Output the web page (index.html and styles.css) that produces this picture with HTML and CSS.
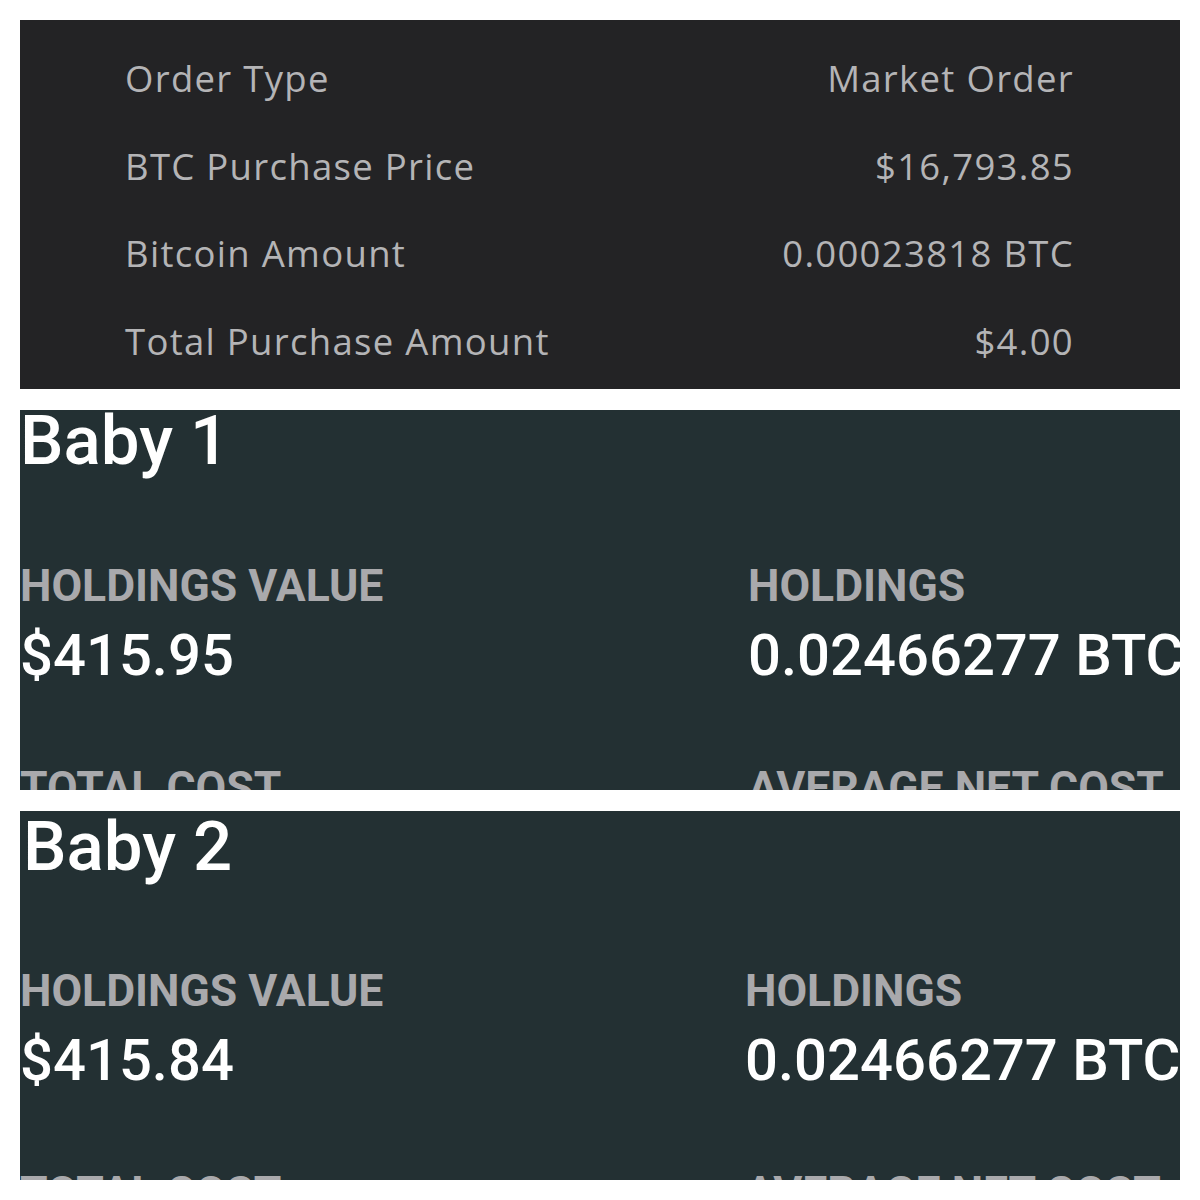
FILE: index.html
```html
<html>
<head>
<title>BTC Purchase</title>
<link rel="stylesheet" href="styles.css">
</head>

<body>
<div class="collage">

<div class="receipt">
	<div class="receipt-row"><span>Order Type</span><span>Market Order</span></div>
	<div class="receipt-row"><span>BTC Purchase Price</span><span>$16,793.85</span></div>
	<div class="receipt-row"><span>Bitcoin Amount</span><span>0.00023818 BTC</span></div>
	<div class="receipt-row"><span>Total Purchase Amount</span><span>$4.00</span></div>
</div>

<div class="wallet">
	<h1 class="wallet-name">Baby 1</h1>
	<div class="stats">
		<div class="stat">
			<div class="stat-label">HOLDINGS VALUE</div>
			<div class="stat-value">$415.95</div>
		</div>
		<div class="stat">
			<div class="stat-label">HOLDINGS</div>
			<div class="stat-value">0.02466277 BTC</div>
		</div>
		<div class="stat">
			<div class="stat-label">TOTAL COST</div>
			<div class="stat-value">$400.00</div>
		</div>
		<div class="stat">
			<div class="stat-label">AVERAGE NET COST</div>
			<div class="stat-value">$16,219.08</div>
		</div>
	</div>
</div>

<div class="wallet wallet-second">
	<h1 class="wallet-name">Baby 2</h1>
	<div class="stats">
		<div class="stat">
			<div class="stat-label">HOLDINGS VALUE</div>
			<div class="stat-value">$415.84</div>
		</div>
		<div class="stat">
			<div class="stat-label">HOLDINGS</div>
			<div class="stat-value">0.02466277 BTC</div>
		</div>
		<div class="stat">
			<div class="stat-label">TOTAL COST</div>
			<div class="stat-value">$400.00</div>
		</div>
		<div class="stat">
			<div class="stat-label">AVERAGE NET COST</div>
			<div class="stat-value">$16,219.08</div>
		</div>
	</div>
</div>

</div>
</body>
</html>
```

FILE: styles.css
```css
body {background-color: #ffffff; margin: 0; padding: 0}
.collage {display: flex; flex-direction: column; gap: 21px; padding: 20px}

/* purchase receipt */
.receipt {background-color: #232325; height: 369px; box-sizing: border-box; padding: 15px 106px 0 105px; overflow: hidden}
.receipt-row {display: flex; justify-content: space-between; height: 87.5px; line-height: 87.5px; font-family: "Open Sans", sans-serif; font-size: 36.5px; letter-spacing: 1.3px; color: #b4b4b6}

/* wallet cards */
.wallet {background-color: #233033; height: 380px; overflow: hidden; font-family: Roboto, sans-serif}
.wallet-second {height: 369px}
.wallet-name {margin: 0; font-size: 69px; font-weight: 500; line-height: 62px; color: #ffffff}
.stats {display: grid; grid-template-columns: 728px auto; row-gap: 82px; margin-top: 92px}
.stat-label {font-size: 44.5px; font-weight: 700; line-height: 44px; color: #a9a9ac; white-space: nowrap}
.stat-value {margin-top: 18px; font-size: 58px; font-weight: 500; line-height: 58px; color: #ffffff; white-space: nowrap}

.wallet-second .wallet-name {padding: 5px 0 0 3px; margin-bottom: -1px}
.wallet-second .stats {grid-template-columns: 725px auto}
```
